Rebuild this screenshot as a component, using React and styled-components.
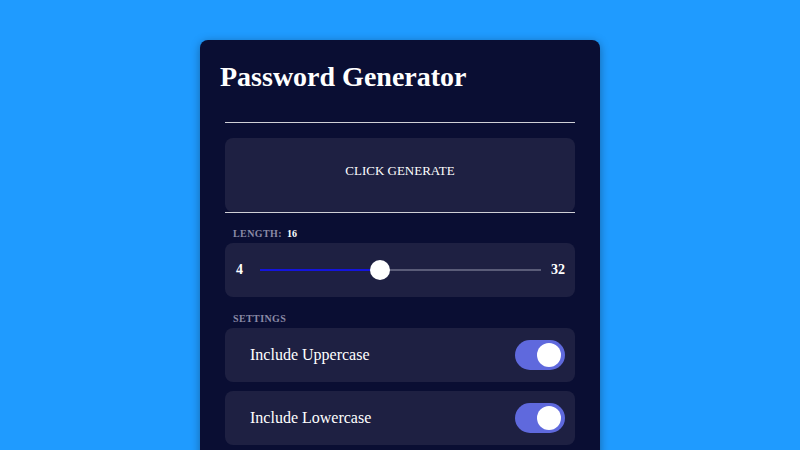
import React, { useState } from "react";
import styled, { createGlobalStyle } from "styled-components";

const GlobalStyle = createGlobalStyle`
  html, body {
    margin: 0;
    height: 100%;
    background: #1f9bff;
    font-family: "Liberation Serif", "Times New Roman", serif;
    overflow: hidden;
  }
`;

const Page = styled.div`
  display: flex;
  justify-content: center;
  padding-top: 40px;
`;

const Card = styled.div`
  width: 400px;
  box-sizing: border-box;
  background: #0a0e33;
  border-radius: 8px;
  padding: 20px 20px 30px;
  box-shadow: 0 2px 10px rgba(0, 0, 0, 0.35);
  color: #fff;
`;

const Title = styled.h1`
  margin: 0;
  font-size: 28px;
  line-height: 34px;
  font-weight: bold;
`;

const Body = styled.div`
  margin: 28px 5px 0;
`;

const ResultWrap = styled.div`
  border-top: 1px solid #cfcfd6;
  border-bottom: 1px solid #cfcfd6;
  padding-top: 15px;
`;

const ResultBox = styled.div`
  height: 74px;
  box-sizing: border-box;
  padding-bottom: 8px;
  background: #1e2042;
  border-radius: 8px;
  display: flex;
  align-items: center;
  justify-content: center;
  font-size: 13px;
`;

const Label = styled.div`
  margin: ${(p) => p.top}px 0 0 8px;
  height: 20px;
  font-size: 10px;
  font-weight: bold;
  color: #8a8aa6;
  letter-spacing: 0.4px;
  display: flex;
  align-items: center;
  gap: 5px;
  span {
    color: #fff;
    letter-spacing: 0;
  }
`;

const Panel = styled.div`
  height: 54px;
  background: #1e2042;
  border-radius: 8px;
  display: flex;
  align-items: center;
  box-sizing: border-box;
  padding: ${(p) => p.pad};
  margin-top: ${(p) => p.gap || 0}px;
`;

const Bound = styled.span`
  font-size: 14px;
  font-weight: bold;
`;

const Track = styled.div`
  flex: 1;
  margin: 0 10px 0 17px;
  height: 2px;
  background: #5a5c78;
  position: relative;
`;

const Fill = styled.div`
  height: 100%;
  background: #1414dc;
`;

const Thumb = styled.div`
  position: absolute;
  top: -9px;
  width: 20px;
  height: 20px;
  border-radius: 50%;
  background: #fff;
  transform: translateX(-10px);
`;

const SettingText = styled.span`
  flex: 1;
  font-size: 16px;
`;

const Toggle = styled.button`
  width: 50px;
  height: 30px;
  border: none;
  padding: 0 4px 0 3px;
  border-radius: 15px;
  background: ${(p) => (p.on ? "#5f69dd" : "#3a3c5c")};
  display: flex;
  align-items: center;
  justify-content: ${(p) => (p.on ? "flex-end" : "flex-start")};
  cursor: pointer;
  &::after {
    content: "";
    width: 24px;
    height: 24px;
    border-radius: 50%;
    background: #fff;
  }
`;

const settings = ["Include Uppercase", "Include Lowercase", "Include Numbers", "Include Symbols"];

export default function App() {
  const [length] = useState(16);
  const [on, setOn] = useState(settings.map(() => true));
  const pct = ((length - 4) / (32 - 4)) * 100;

  return (
    <Page>
      <GlobalStyle />
      <Card>
        <Title>Password Generator</Title>
        <Body>
          <ResultWrap>
            <ResultBox>CLICK GENERATE</ResultBox>
          </ResultWrap>
          <Label top={10}>
            LENGTH: <span>{length}</span>
          </Label>
          <Panel pad="0 10px 0 11px">
            <Bound>4</Bound>
            <Track>
              <Fill style={{ width: pct + "%" }} />
              <Thumb style={{ left: pct + "%" }} />
            </Track>
            <Bound>32</Bound>
          </Panel>
          <Label top={11}>SETTINGS</Label>
          {settings.map((s, i) => (
            <Panel key={s} pad="0 10px 0 25px" gap={i ? 9 : 0}>
              <SettingText>{s}</SettingText>
              <Toggle
                on={on[i] ? 1 : 0}
                onClick={() => setOn(on.map((v, j) => (j === i ? !v : v)))}
              />
            </Panel>
          ))}
        </Body>
      </Card>
    </Page>
  );
}
